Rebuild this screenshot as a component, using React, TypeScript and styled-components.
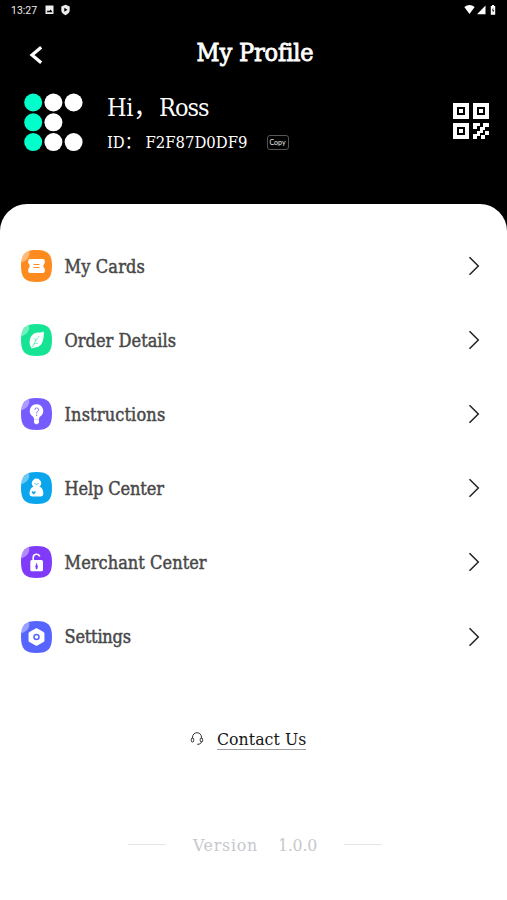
import React from "react";
import styled, { createGlobalStyle } from "styled-components";

const Global = createGlobalStyle`
  * { box-sizing: border-box; }
  body { margin: 0; background: #000; }
`;

const Page = styled.div`
  width: 507px;
  height: 900px;
  overflow: hidden;
  display: flex;
  flex-direction: column;
  background: #000;
  color: #fff;
  font-family: "DejaVu Serif Condensed", "DejaVu Serif", "Noto Sans CJK SC", serif;
  font-stretch: condensed;
  white-space: nowrap;
`;

const StatusBar = styled.div`
  height: 20px;
  flex: none;
  display: flex;
  align-items: center;
  padding: 0 9px 0 11px;
  font: 400 10.5px Roboto, sans-serif;
  color: #eee;
`;

const Clock = styled.span`
  width: 34px;
`;

const Spacer = styled.div`
  flex: 1;
`;

const Icon = styled.svg`
  display: block;
  flex: none;
`;

const TitleBar = styled.header`
  height: 65px;
  flex: none;
  display: grid;
  grid-template-columns: 72px 1fr 72px;
  align-items: center;
`;

const BackButton = styled.button`
  border: 0;
  padding: 4px 0 0 28px;
  background: none;
  color: #fff;
`;

const Title = styled.h1`
  margin: 0;
  padding: 0 0 0 3px;
  text-align: center;
  font-size: 25px;
  line-height: 34px;
  font-weight: 400;
  letter-spacing: -0.15px;
  -webkit-text-stroke: 0.8px #fff;
`;

const Profile = styled.section`
  height: 118.5px;
  flex: none;
  display: flex;
  align-items: flex-start;
  padding: 8px 18px 0 24px;
`;

const UserInfo = styled.div`
  flex: 1;
  padding-left: 24px;
`;

const Greeting = styled.div`
  height: 30px;
  display: flex;
  font-size: 25px;
  line-height: 29px;
  letter-spacing: -1px;
`;

const Salutation = styled.span`
  width: 52px;
  letter-spacing: -0.3px;
`;

const IdLine = styled.div`
  margin-top: 9px;
  height: 22px;
  display: flex;
  align-items: center;
  font-size: 16.5px;
  line-height: 22px;
`;

const IdKey = styled.span`
  width: 38.5px;
`;

const IdValue = styled.span`
  width: 121px;
`;

const CopyButton = styled.button`
  width: 22px;
  height: 15px;
  margin-top: -1px;
  padding: 0;
  border: 1px solid #555;
  border-radius: 3px;
  background: #000;
  color: #eee;
  font: 7px/13px Lato, sans-serif;
`;

const QrButton = styled.div`
  padding-top: 10px;
`;

const Sheet = styled.main`
  flex: 1;
  display: flex;
  flex-direction: column;
  padding-top: 25.5px;
  border-radius: 27px 27px 0 0;
  background: #fff;
`;

const MenuRow = styled.div`
  height: 74.1px;
  flex: none;
  display: flex;
  align-items: center;
  padding: 0 27px 0 21px;
`;

const MenuLabel = styled.span<{ $spacing: number }>`
  flex: 1;
  padding: 1px 0 0 12.5px;
  color: #484848;
  font-size: 18px;
  line-height: 26px;
  letter-spacing: ${(p) => p.$spacing}px;
  -webkit-text-stroke: 0.45px #484848;
`;

const Contact = styled.div`
  display: flex;
  align-items: center;
  height: 26px;
  margin: 52px 0 0 190px;
`;

const ContactLink = styled.a`
  margin-left: 13px;
  height: 23px;
  border-bottom: 1px solid #a0a0a0;
  color: #151515;
  font-size: 17.5px;
  line-height: 24px;
  letter-spacing: 0.05px;
`;

const VersionLine = styled.footer`
  height: 24px;
  margin-top: 81px;
  display: flex;
  align-items: center;
  padding-left: 128px;
  color: #c5c8cc;
  font-size: 17.5px;
`;

const Rule = styled.span`
  width: 38px;
  height: 1px;
  background: #e4e5e6;
`;

const VersionName = styled.span`
  width: 85px;
  margin-left: 27px;
  letter-spacing: 0.8px;
`;

const VersionNumber = styled.span`
  width: 66px;
  letter-spacing: -0.2px;
`;

const dots: [number, number][] = [
  [0, 0], [1, 0], [2, 0], [0, 1], [1, 1], [0, 2], [1, 2], [2, 2],
];

function Logo() {
  return (
    <Icon width="59" height="59" viewBox="0 0 59 59">
      {dots.map(([c, r]) => (
        <circle key={`${c}${r}`} cx={9.2 + c * 20.2} cy={9.5 + r * 19.8} r="9" fill={c === 0 ? "#00ffcb" : "#fff"} />
      ))}
    </Icon>
  );
}

function QrIcon() {
  return (
    <Icon width="36" height="36" viewBox="0 0 36 36" fill="#fff">
      <path fillRule="evenodd" d="M0 0h16v16H0zM4 4v8h8V4zM20 0h16v16H20zM24 4v8h8V4zM0 20h16v16H0zM4 24v8h8v-8z" />
      <path d="M6 6h4v4H6zM26 6h4v4h-4zM6 26h4v4H6z" />
      <path d="M20 20h7v3h-3v3h-4zM30 20h6v4h-4v3h-2v3h-3v3h-3v3h-4v-5h4v-3h3v-4h3zM32 28h4v4h-4zM28 32h4v4h-4z" />
    </Icon>
  );
}

type Kind = "ticket" | "leaf" | "bulb" | "person" | "lock" | "gear";

const fills: Record<Kind, string> = {
  ticket: "#ff8b1f",
  leaf: "#14e493",
  bulb: "#765bff",
  person: "#0aa5ec",
  lock: "#803bfa",
  gear: "#5665ff",
};

function Glyph({ kind }: { kind: Kind }) {
  const fill = fills[kind];
  switch (kind) {
    case "ticket":
      return (
        <>
          <path fill="#fff" d="M9 9h13q1.8 0 1.8 2v2q-3 2.8 0 6v2q0 2-1.8 2H9q-1.8 0-1.8-2v-2q3-3 0-6v-2q0-2 1.8-2z" />
          <path stroke={fill} strokeWidth="1" d="M12.5 14.5h6M12.5 17.5h6" />
        </>
      );
    case "leaf":
      return (
        <>
          <path fill="#fff" d="M22.8 7.5c.2 8-1.2 15-7.5 15.8-1.6.2-2.5.8-4.5 1.2C6.5 19 9 10.5 14.5 9c2.8-.8 6.2-.3 8.3-1.5z" />
          <path fill="none" stroke={fill} strokeWidth=".6" d="M11.5 23c1.5-4 3.8-7.5 6.8-11M14.5 17.5l-.5-3.5M13 20l4-1" />
        </>
      );
    case "bulb":
      return (
        <>
          <path fill="#fff" d="M15.5 6.3a6.7 6.7 0 0 1 3.7 12.3c-.8.6-1.1 1.4-1.1 2.6h-5.2c0-1.2-.3-2-1.1-2.6a6.7 6.7 0 0 1 3.7-12.3zM13 21.500h5v3.700h-1l-.7 1h-1.600l-.7-1h-1z" />
          <path fill="none" stroke={fill} strokeWidth=".9" d="M13.8 11.8a1.9 1.9 0 1 1 2.8 1.7q-1 .6-1 2.1M15.6 16.7v1.3" />
        </>
      );
    case "person":
      return (
        <>
          <circle cx="15.5" cy="11.3" r="4.7" fill="#fff" />
          <path fill="#fff" d="M11.5 15h8c2.3 1.5 2.8 4 2.8 6.5 0 2.3-1 3-3 3h-7.800c-2 0-3-.8-3-3 0-2.500.8-5 3-6.500z" />
          <path fill="none" stroke={fill} strokeWidth=".7" d="M13.5 11.5q2 1.600 4 0" />
          <path fill={fill} d="M12.7 22.5l-2-2q0-1.800 2-.8 2-1 2 .8z" />
        </>
      );
    case "lock":
      return (
        <>
          <rect x="9.3" y="14" width="12.7" height="11.3" rx="1.5" fill="#fff" />
          <path fill="none" stroke="#fff" strokeWidth="1.6" d="M12.2 15v-3.3a3.4 3.4 0 0 1 6.6-1.2" />
          <path fill={fill} d="M15.6 16.5l1.2 3.7-.5 3h-1.4l-.5-3z" />
        </>
      );
    case "gear":
      return (
        <>
          <path fill="#fff" stroke="#fff" strokeWidth="3.5" strokeLinejoin="round" d="M15.5 9l6.2 3.5v7l-6.2 3.5-6.2-3.5v-7z" />
          <circle cx="15.5" cy="16" r="2.5" fill="none" stroke={fill} strokeWidth="1.5" />
        </>
      );
  }
}

function MenuIcon({ kind }: { kind: Kind }) {
  return (
    <Icon width="31" height="32" viewBox="0 0 31 32">
      <path fill={fills[kind]} d="M15.5 0C27 0 31 4.2 31 16S27 32 15.5 32 0 27.8 0 16 4 0 15.5 0z" />
      <path fill="#fff" opacity=".4" d="M8.2 1Q9.5 9 1 12.2L.4 10.5Q1.2 2.6 8.2 1z" />
      <Glyph kind={kind} />
    </Icon>
  );
}

const menu: { kind: Kind; label: string; spacing: number }[] = [
  { kind: "ticket", label: "My Cards", spacing: 0.15 },
  { kind: "leaf", label: "Order Details", spacing: 0.03 },
  { kind: "bulb", label: "Instructions", spacing: 0.15 },
  { kind: "person", label: "Help Center", spacing: -0.12 },
  { kind: "lock", label: "Merchant Center", spacing: 0.05 },
  { kind: "gear", label: "Settings", spacing: -0.2 },
];

export default function App() {
  return (
    <Page>
      <Global />
      <StatusBar>
        <Clock>13:27</Clock>
        <Icon width="26" height="12" viewBox="0 0 26 12" fill="#eee">
          <path fillRule="evenodd" d="M.5 1.5h8v8.5h-8zM1.5 8.2h6L5.7 5.5 4 7.2 3 6.3z" />
          <path fillRule="evenodd" d="M20.5.8l4.200 1.700v4c0 2-2 3.500-4.200 4.800-2.200-1.300-4.200-2.800-4.200-4.800v-4zM19.300 3.800v4l3.200-2z" />
        </Icon>
        <Spacer />
        <Icon width="34" height="12" viewBox="0 0 34 12" fill="#fff">
          <path d="M.3 3q5.200-3.800 10.400 0L5.500 10zM21.500 1.500V10.300H13zM26.800 2h1.200V1h2v1h1.200v8.700h-4.400z" />
          <path fill="#333" d="M29.300 3.500l-1.500 3h1v2.500l1.500-3h-1z" />
        </Icon>
      </StatusBar>
      <TitleBar>
        <BackButton aria-label="Back">
          <Icon width="16" height="20" viewBox="0 0 16 20" fill="none" stroke="#fff" strokeWidth="3.2">
            <path d="M13.2 2.2L4 10l9.2 7.8" />
          </Icon>
        </BackButton>
        <Title>My Profile</Title>
      </TitleBar>
      <Profile>
        <Logo />
        <UserInfo>
          <Greeting>
            <Salutation>Hi，</Salutation>
            <span>Ross</span>
          </Greeting>
          <IdLine>
            <IdKey>ID：</IdKey>
            <IdValue>F2F87D0DF9</IdValue>
            <CopyButton>Copy</CopyButton>
          </IdLine>
        </UserInfo>
        <QrButton>
          <QrIcon />
        </QrButton>
      </Profile>
      <Sheet>
        {menu.map((item) => (
          <MenuRow key={item.label}>
            <MenuIcon kind={item.kind} />
            <MenuLabel $spacing={item.spacing}>{item.label}</MenuLabel>
            <Icon width="12" height="20" viewBox="0 0 12 20" fill="none" stroke="#222" strokeWidth="1.5">
              <path d="M1.5 1.2L10.3 10 1.5 18.8" />
            </Icon>
          </MenuRow>
        ))}
        <Contact>
          <Icon width="14" height="14" viewBox="0 0 14 14" fill="none" stroke="#333" strokeWidth="1">
            <path d="M2.5 6.5V5.2a4.5 4.5 0 0 1 9 0v1.3M11.5 9.5q0 2.8-4.3 2.8" />
            <rect x="1.3" y="6" width="2.4" height="4" rx="1.2" />
            <rect x="10.2" y="6" width="2.4" height="4" rx="1.2" />
          </Icon>
          <ContactLink>Contact Us</ContactLink>
        </Contact>
        <VersionLine>
          <Rule />
          <VersionName>Version</VersionName>
          <VersionNumber>1.0.0</VersionNumber>
          <Rule />
        </VersionLine>
      </Sheet>
    </Page>
  );
}
